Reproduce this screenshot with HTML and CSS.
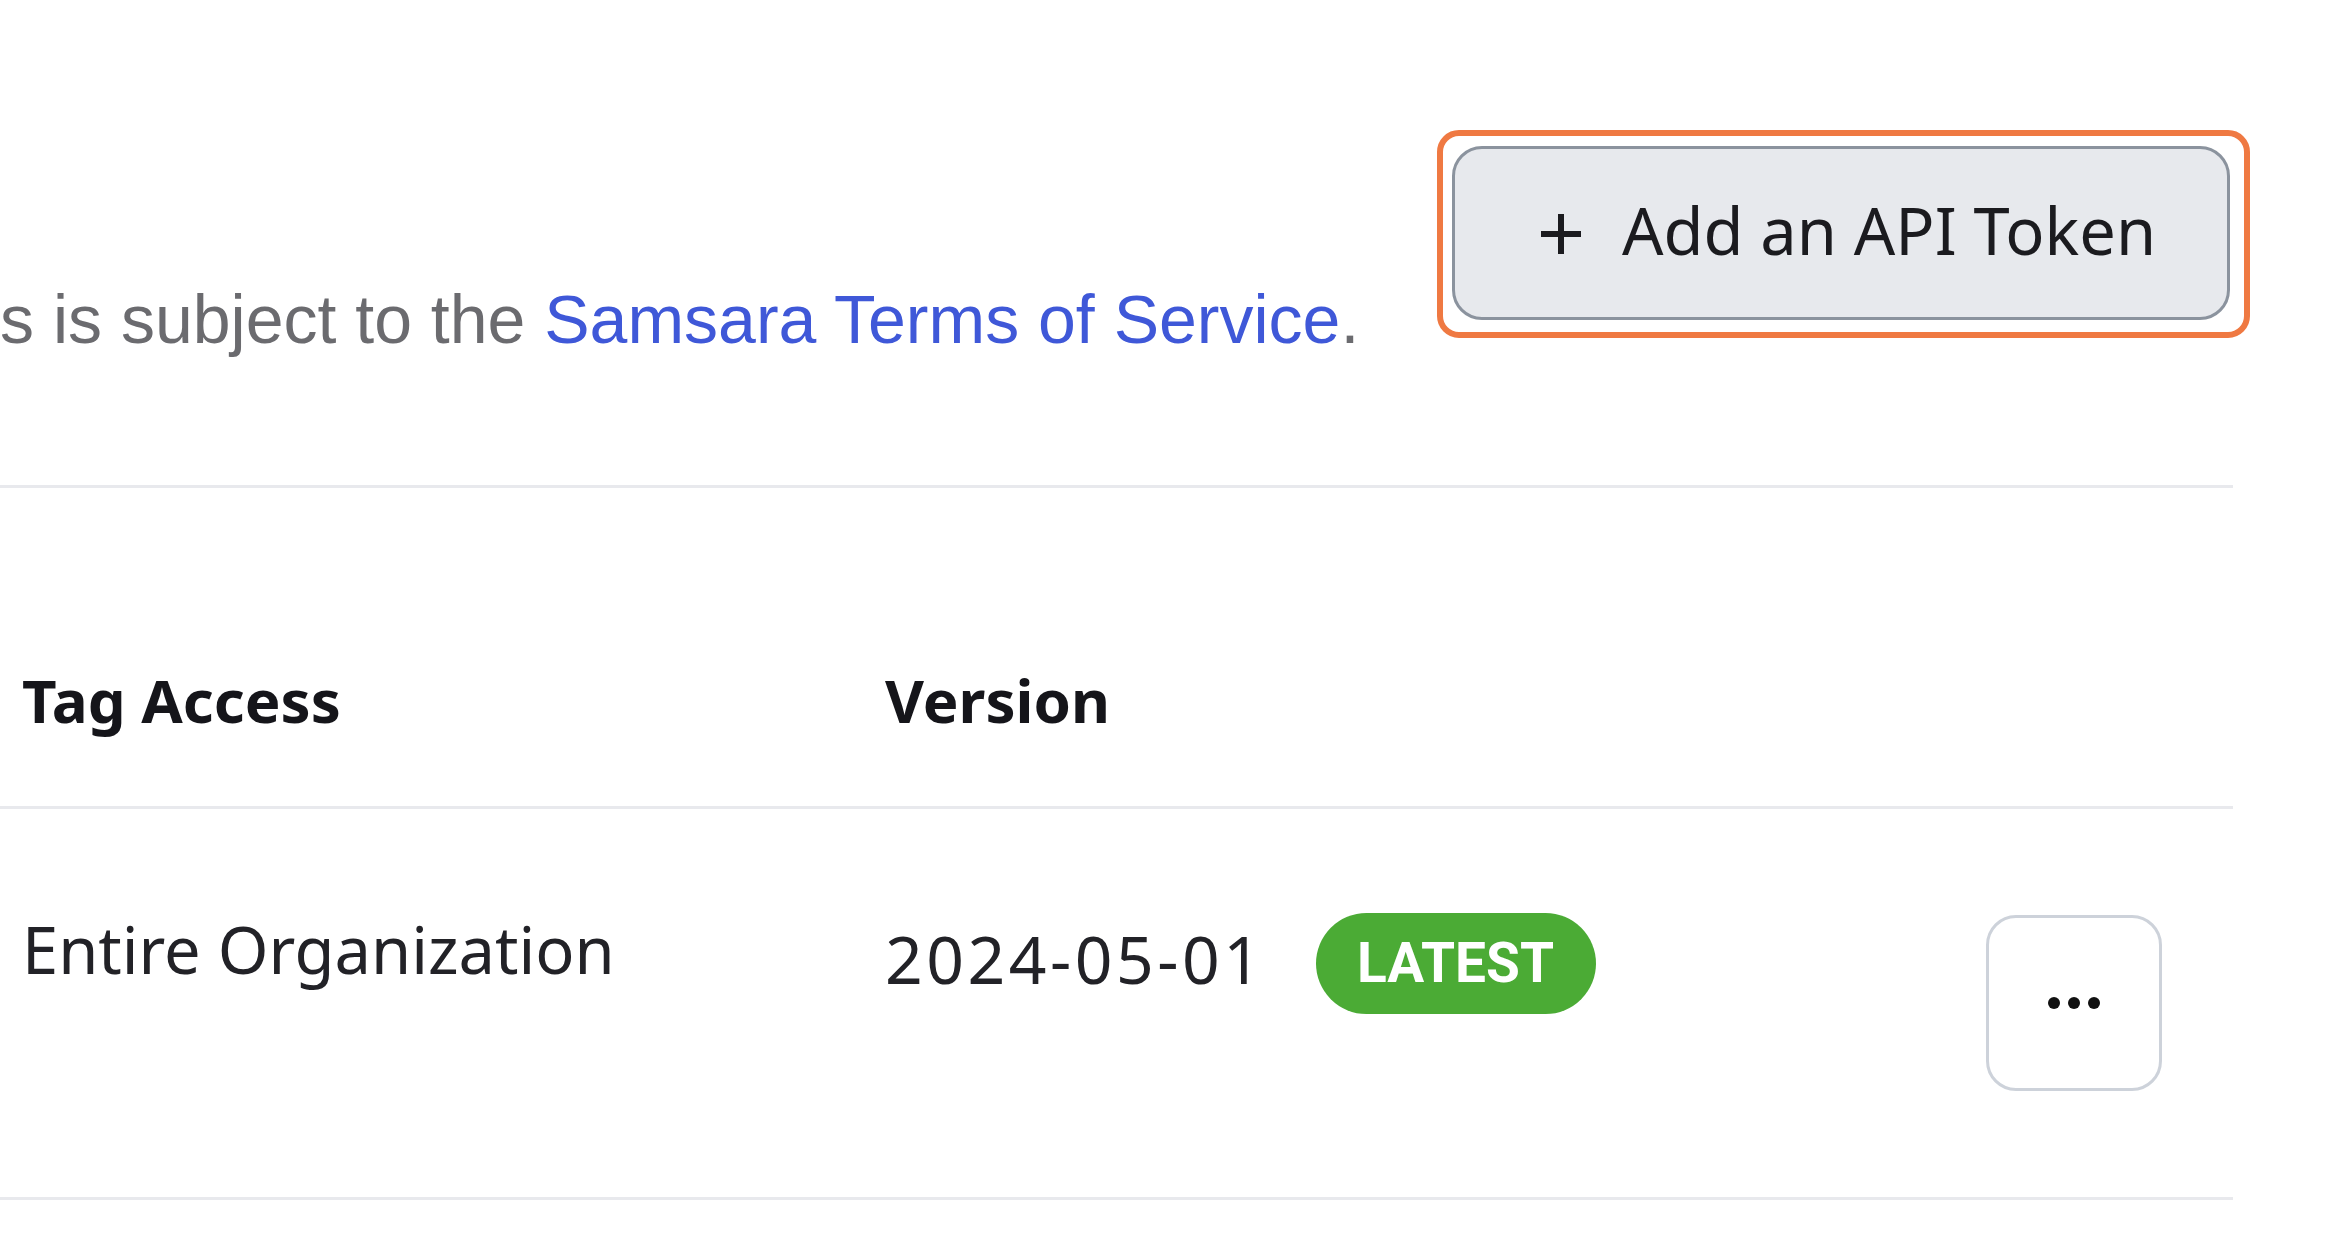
FILE: index.html
```html
<!DOCTYPE html>
<html lang="en">
<head>
<meta charset="utf-8">
<title>API Tokens</title>
<link rel="stylesheet" href="styles.css">
</head>
<body>
<div class="page">
  <div class="top">
    <p class="terms">s is subject to the <a class="link" href="#">Samsara Terms of Service</a>.</p>
    <div class="btn-wrap">
      <button class="add-btn" type="button">
        <svg class="plus" viewBox="0 0 46 46" width="46" height="46" aria-hidden="true"><path d="M23 3V43M3 23H43" stroke="#1b1b1f" stroke-width="6" fill="none"/></svg>
        <span>Add an API Token</span>
      </button>
      <span class="highlight"></span>
    </div>
  </div>
  <div class="table">
    <div class="row head">
      <div class="cell c1">Tag Access</div>
      <div class="cell c2">Version</div>
      <div class="cell c3"></div>
    </div>
    <div class="row body">
      <div class="cell c1 org">Entire Organization</div>
      <div class="cell c2 ver"><span class="date">2024-05-01</span><span class="badge">LATEST</span></div>
      <div class="cell c3 act">
        <button class="more-btn" type="button" aria-label="More">
          <svg viewBox="0 0 54 14" width="54" height="14" aria-hidden="true"><circle cx="7" cy="7" r="6" fill="#111"/><circle cx="27" cy="7" r="6" fill="#111"/><circle cx="47" cy="7" r="6" fill="#111"/></svg>
        </button>
      </div>
    </div>
  </div>
</div>
</body>
</html>
```
FILE: styles.css
```css
html, body {
  margin: 0;
  padding: 0;
  background: #ffffff;
}
.page {
  width: 2233px;
  font-family: "Noto Sans", "Open Sans", sans-serif;
  color: #1f1f24;
}
.top {
  display: flex;
  justify-content: space-between;
  align-items: flex-start;
  padding-top: 146px;
  padding-bottom: 125px;
}
.terms {
  margin: 132px 0 0 0;
  font-family: "Liberation Sans", Arial, sans-serif;
  font-size: 68px;
  line-height: 82px;
  color: #6b6b6f;
  white-space: nowrap;
}
.link {
  color: #3f58d8;
  text-decoration: none;
}
.btn-wrap {
  position: relative;
  margin-right: 3px;
}
.add-btn {
  display: flex;
  align-items: center;
  justify-content: center;
  gap: 38px;
  width: 778px;
  height: 174px;
  box-sizing: border-box;
  border: 3px solid #8b939e;
  border-radius: 30px;
  background: #e7e9ed;
  font-family: "Noto Sans", "Open Sans", sans-serif;
  font-size: 65px;
  color: #1b1b1f;
  padding: 0 0 6px 12px;
}
.plus {
  width: 46px;
  height: 46px;
  margin-top: 8px;
}
.highlight {
  position: absolute;
  left: -15px;
  top: -16px;
  right: -20px;
  bottom: -18px;
  border: 6px solid #ef7942;
  border-radius: 22px;
  pointer-events: none;
}
.table {
  border-bottom: 3px solid #e8e9ed;
}
.row {
  display: grid;
  grid-template-columns: 863px 1fr auto;
  border-top: 3px solid #e8e9ed;
}
.cell {
  padding-left: 22px;
}
.head {
  height: 318px;
  align-items: end;
  font-weight: 700;
  font-size: 60px;
  line-height: 72px;
  color: #15151a;
}
.head .cell {
  padding-bottom: 70px;
}
.body {
  height: 388px;
  font-size: 65px;
  line-height: 80px;
  color: #222227;
}
.org {
  padding-top: 100px;
}
.ver {
  display: flex;
  align-items: center;
  gap: 51px;
  padding-top: 104px;
  align-self: start;
}
.date {
  font-size: 66px;
  letter-spacing: 3.5px;
  margin-bottom: 12px;
}
.badge {
  display: inline-flex;
  align-items: center;
  justify-content: center;
  width: 280px;
  height: 101px;
  border-radius: 51px;
  background: #4bab35;
  color: #ffffff;
  font-family: Roboto, "Liberation Sans", sans-serif;
  font-weight: 700;
  font-size: 55px;
  line-height: 1;
}
.act {
  align-self: center;
  padding-right: 71px;
}
.more-btn {
  display: flex;
  align-items: center;
  justify-content: center;
  width: 176px;
  height: 176px;
  box-sizing: border-box;
  border: 3px solid #cdd2da;
  border-radius: 30px;
  background: #ffffff;
  padding: 0;
  margin-top: 0;
}
```
